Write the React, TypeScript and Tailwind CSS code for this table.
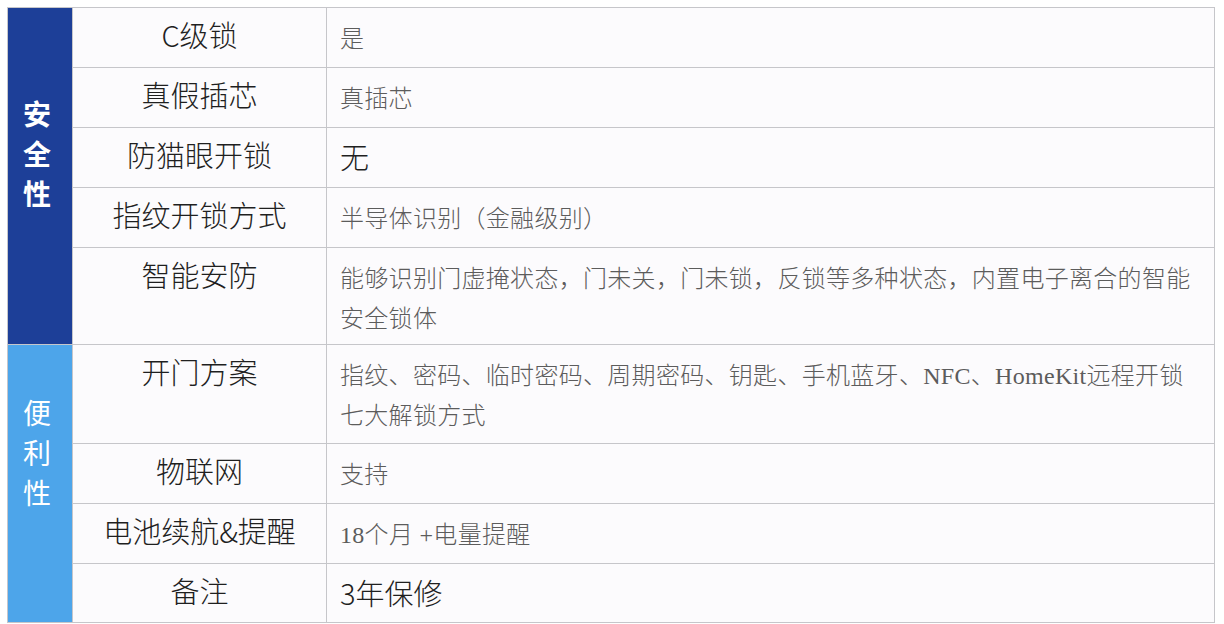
import React from 'react'

type Row = {
    label: string
    value: React.ReactNode
    big?: boolean
}

const safety: Row[] = [
    { label: 'C级锁', value: '是' },
    { label: '真假插芯', value: '真插芯' },
    { label: '防猫眼开锁', value: '无', big: true },
    { label: '指纹开锁方式', value: '半导体识别（金融级别）' },
    {
        label: '智能安防',
        value: (
            <>
                能够识别门虚掩状态，门未关，门未锁，反锁等多种状态，内置电子离合的智能
                <br />
                安全锁体
            </>
        ),
    },
]

const convenience: Row[] = [
    {
        label: '开门方案',
        value: (
            <>
                指纹、密码、临时密码、周期密码、钥匙、手机蓝牙、NFC、HomeKit远程开锁
                <br />
                七大解锁方式
            </>
        ),
    },
    { label: '物联网', value: '支持' },
    { label: '电池续航&提醒', value: '18个月 +电量提醒' },
    { label: '备注', value: '3年保修', big: true },
]

const Cells: React.FC<{ rows: Row[] }> = ({ rows }) => (
    <>
        {rows.map((r) => (
            <React.Fragment key={r.label}>
                <div className="bg-[#fcfbfd] text-center text-[29px] leading-[36px] pt-2 font-light text-[#1f1f1f] font-['Noto_Sans_CJK_SC','Noto_Sans',sans-serif]">
                    {r.label}
                </div>
                {r.big ? (
                    <div className="bg-[#fcfbfd] pl-[13px] pt-[9px] text-[29px] leading-[38px] text-[#1f1f1f] font-light font-['Noto_Sans_CJK_SC','Noto_Sans',sans-serif]">
                        {r.value}
                    </div>
                ) : (
                    <div className="bg-[#fcfbfd] pl-[13px] pt-[11px] text-[24px] leading-[40px] text-[#5c5c5c] font-light whitespace-nowrap tracking-[0.3px] font-['Liberation_Serif','Noto_Sans_CJK_SC',serif]">
                        {r.value}
                    </div>
                )}
            </React.Fragment>
        ))}
    </>
)

export default function App() {
    return (
        <div className="w-[1224px] h-[624px] bg-white pt-[7px] pl-[7px]">
            <div className="w-[1208px] grid grid-cols-[64px_253px_1fr] grid-rows-[59px_59px_59px_59px_96px_98px_59px_59px_58px] gap-px bg-[#c6c6ca] border border-[#c6c6ca]">
                <div className="row-span-5 bg-[#1d3f98] flex flex-col items-center justify-center pb-[46px] pr-[6px] text-white font-bold text-[28px] leading-[40px] font-['Noto_Sans_CJK_SC','Noto_Sans',sans-serif]">
                    <span>安</span>
                    <span>全</span>
                    <span>性</span>
                </div>
                <Cells rows={safety} />
                <div className="row-span-4 bg-[#4da5ea] flex flex-col items-center justify-center pb-16 pr-[6px] text-white text-[28px] leading-[40px] font-['Noto_Sans_CJK_SC','Noto_Sans',sans-serif]">
                    <span>便</span>
                    <span>利</span>
                    <span>性</span>
                </div>
                <Cells rows={convenience} />
            </div>
        </div>
    )
}
